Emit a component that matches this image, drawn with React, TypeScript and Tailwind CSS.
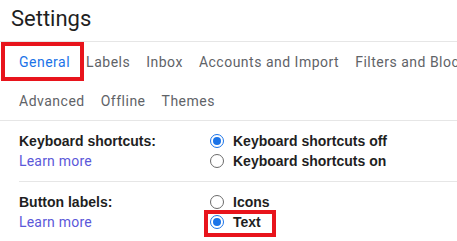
function Radio({ checked }: { checked?: boolean }) {
  return checked ? (
    <span className="flex h-[14px] w-[14px] items-center justify-center rounded-full border-[1.5px] border-[#1a73e8] bg-white">
      <span className="h-[8px] w-[8px] rounded-full bg-[#1a73e8]" />
    </span>
  ) : (
    <span className="h-[14px] w-[14px] rounded-full border border-[#6b6b6b] bg-white" />
  )
}

function Option({ label, checked, boxed }: { label: string; checked?: boolean; boxed?: boolean }) {
  return (
    <div className="relative flex h-[20px] items-center gap-[9px] pl-[36px]">
      <Radio checked={checked} />
      <span className="font-['Liberation_Sans',sans-serif] font-bold text-[#1f1f1f]">{label}</span>
      {boxed && <span className="absolute left-[30px] top-[-2px] h-[27px] w-[72px] border-[4px] border-[#e8141c]" />}
    </div>
  )
}

function Section({ title, options }: { title: string; options: { label: string; checked?: boolean; boxed?: boolean }[] }) {
  return (
    <div className="flex py-[10px]">
      <div className="w-[174px] pl-[19px]">
        <div className="h-[20px] leading-[20px] font-['Liberation_Sans',sans-serif] font-bold text-[#1f1f1f]">{title}</div>
        <div className="h-[20px] leading-[20px] tracking-[0.2px] text-[#5b58d9]">Learn more</div>
      </div>
      <div>
        {options.map((o) => (
          <Option key={o.label} {...o} />
        ))}
      </div>
    </div>
  )
}

export default function App() {
  return (
    <div className="h-[241px] w-[457px] overflow-hidden bg-white text-[14px] font-['Roboto',sans-serif]">
      {/* title */}
      <div className="h-[42px] border-b border-[#e6e6e6] pl-[11px] pt-[3px] text-[22px] leading-[32px] text-[#1f1f1f]">
        Settings
      </div>

      {/* tabs */}
      <div className="border-b border-[#e6e6e6] text-[#5f6368] whitespace-nowrap tracking-[0.5px] leading-[20px]">
        <div className="flex h-[40px] items-center gap-[16px] pl-[19px]">
          <span className="relative text-[#1a73e8]">
            General
            <span className="absolute left-[-18px] top-[-10px] h-[39px] w-[83px] border-[4px] border-[#e8141c]" />
          </span>
          <span>Labels</span>
          <span>Inbox</span>
          <span>Accounts and Import</span>
          <span>Filters and Blocked Addresses</span>
        </div>
        <div className="flex h-[38px] items-center gap-[16px] pl-[19px]">
          <span>Advanced</span>
          <span>Offline</span>
          <span>Themes</span>
        </div>
      </div>

      {/* settings rows */}
      <Section
        title="Keyboard shortcuts:"
        options={[{ label: 'Keyboard shortcuts off', checked: true }, { label: 'Keyboard shortcuts on' }]}
      />
      <div className="ml-[19px] border-t border-[#e6e6e6]" />
      <Section
        title="Button labels:"
        options={[{ label: 'Icons' }, { label: 'Text', checked: true, boxed: true }]}
      />
    </div>
  )
}
